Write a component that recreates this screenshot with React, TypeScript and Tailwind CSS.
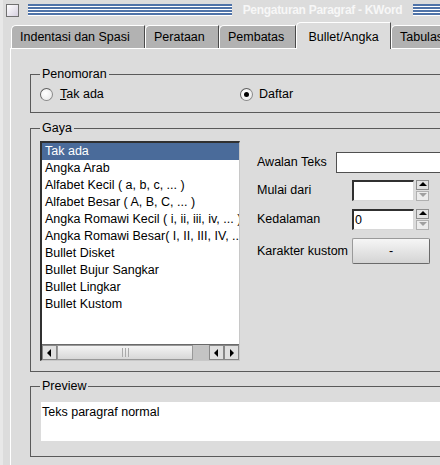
import React from "react";

const items = [
  "Tak ada",
  "Angka Arab",
  "Alfabet Kecil ( a, b, c, ... )",
  "Alfabet Besar ( A, B, C, ... )",
  "Angka Romawi Kecil ( i, ii, iii, iv, ... )",
  "Angka Romawi Besar( I, II, III, IV, ... )",
  "Bullet Disket",
  "Bullet Bujur Sangkar",
  "Bullet Lingkar",
  "Bullet Kustom",
];

function Stripes({ className }: { className: string }) {
  return (
    <div
      className={
        "h-[12px] bg-[repeating-linear-gradient(to_bottom,#4f73a8_0px,#4f73a8_2px,#ffffff_2px,#ffffff_3px)] " +
        className
      }
    />
  );
}

function Tab({ label, w, active }: { label: string; w: string; active?: boolean }) {
  if (active) {
    return (
      <div
        className={
          "relative z-10 -mb-px h-[27px] shrink-0 whitespace-nowrap flex items-start pt-[5px] justify-center bg-[#dcdcdc] border-l border-t border-white rounded-tl-[5px] border-r border-r-[#505050] " +
          w
        }
      >
        {label}
      </div>
    );
  }
  return (
    <div
      className={
        "h-[23px] shrink-0 flex items-center pl-[8px] bg-[#b2b2b2] border-l border-t border-white rounded-tl-[5px] border-r border-r-[#4a4a4a] whitespace-nowrap overflow-hidden " +
        w
      }
    >
      {label}
    </div>
  );
}

function Radio({ checked }: { checked?: boolean }) {
  return (
    <div className="w-[13px] h-[13px] rounded-full border border-[#8a8a8a] border-t-[#606060] border-l-[#606060] bg-[radial-gradient(circle_at_40%_40%,#ffffff,#e4e4e4)] flex items-center justify-center">
      {checked && <div className="w-[5px] h-[5px] rounded-full bg-black" />}
    </div>
  );
}

function Arrow({ dir, muted }: { dir: "up" | "down" | "left" | "right"; muted?: boolean }) {
  const c = muted ? "#a0a0a0" : "#000";
  const pts = {
    up: "1,6 5,2 9,6",
    down: "1,2 5,6 9,2",
    left: "6,1 2,5 6,9",
    right: "3,1 7,5 3,9",
  }[dir];
  return (
    <svg width="10" height="10" viewBox="0 0 10 10">
      <polygon points={pts} fill={c} />
    </svg>
  );
}

function SpinBox({ value }: { value?: string }) {
  return (
    <div className="flex items-center gap-[2px]">
      <div className="w-[62px] h-[21px] bg-white border-t-2 border-l-2 border-[#303030] border-r border-b border-r-[#d8d8d8] border-b-[#d8d8d8] pl-[1px] flex items-center">
        {value}
      </div>
      <div className="flex flex-col gap-px">
        <div className="w-[13px] h-[10px] bg-[#e2e2e2] border border-[#8c8c8c] flex items-center justify-center">
          <Arrow dir="up" />
        </div>
        <div className="w-[13px] h-[10px] bg-[#ececec] border border-[#b0b0b0] flex items-center justify-center">
          <Arrow dir="down" muted />
        </div>
      </div>
    </div>
  );
}

export default function App() {
  return (
    <div className="w-[440px] h-[465px] overflow-hidden bg-[#dcdcdc] text-[12.5px] text-black font-['Liberation_Sans',Arial,sans-serif] border-l-[3px] border-l-[#e8e8e8]">
      {/* title bar */}
      <div className="h-[20px] flex items-center pl-[3px]">
        <div className="w-[13px] h-[13px] shrink-0 border border-[#707070] bg-[linear-gradient(135deg,#ffffff,#d6d0e0)]" />
        <Stripes className="ml-[9px] w-[204px] shrink-0" />
        <div className="w-[181px] shrink-0 overflow-hidden text-center text-[12px] font-bold text-[#f7f7f7] whitespace-nowrap tracking-[-0.3px]">
          Pengaturan Paragraf - KWord
        </div>
        <Stripes className="flex-1" />
      </div>

      {/* tabs */}
      <div className="flex items-end h-[28px] pl-[8px]">
        <Tab label="Indentasi dan Spasi" w="w-[134px]" />
        <Tab label="Perataan" w="w-[74px]" />
        <Tab label="Pembatas" w="w-[77px]" />
        <Tab label="Bullet/Angka" w="w-[95px]" active />
        <Tab label="Tabulasi" w="w-[70px]" />
      </div>

      {/* panel */}
      <div className="ml-[7px] h-[420px] border-l border-t border-white pl-[19px] pt-[18px]">
        <fieldset className="w-[440px] border border-[#5a5a5a] pb-[10px]">
          <legend className="ml-[9px] px-[2px] leading-[14px]">Penomoran</legend>
          <div className="flex items-center pt-[6px] pl-[9px] h-[21px]">
            <Radio />
            <span className="ml-[7px] w-[180px]">
              <span className="underline">T</span>ak ada
            </span>
            <Radio checked />
            <span className="ml-[6px]">Daftar</span>
          </div>
        </fieldset>

        <fieldset className="mt-[8px] w-[440px] border border-[#5a5a5a] pb-[10px]">
          <legend className="ml-[9px] px-[2px] leading-[14px]">Gaya</legend>
          <div className="flex pt-[6px] pl-[9px]">
            <div className="w-[200px] h-[220px] bg-white border-t-2 border-l-2 border-[#303030] border-r border-b border-r-[#c8c8c8] border-b-[#c8c8c8] flex flex-col">
              <div className="flex-1 overflow-hidden">
                {items.map((it, i) => (
                  <div
                    key={it}
                    className={
                      "h-[17px] leading-[17px] pl-[3px] whitespace-nowrap " +
                      (i === 0 ? "bg-[#4a6b9a] text-white" : "")
                    }
                  >
                    {it}
                  </div>
                ))}
              </div>
              <div className="h-[16px] flex bg-[#c4c4c4] border-t border-[#6a6a6a]">
                <div className="w-[15px] bg-[#e0e0e0] border border-[#888] flex items-center justify-center">
                  <Arrow dir="left" />
                </div>
                <div className="w-[136px] bg-[linear-gradient(to_bottom,#f4f4f4,#d8d8d8)] border border-[#999] flex items-center justify-center gap-[2px]">
                  <div className="w-px h-[9px] bg-[#aaa]" />
                  <div className="w-px h-[9px] bg-[#aaa]" />
                  <div className="w-px h-[9px] bg-[#aaa]" />
                </div>
                <div className="flex-1" />
                <div className="w-[15px] bg-[#e0e0e0] border border-[#888] flex items-center justify-center">
                  <Arrow dir="left" />
                </div>
                <div className="w-[15px] bg-[#e0e0e0] border border-[#888] flex items-center justify-center">
                  <Arrow dir="right" />
                </div>
              </div>
            </div>

            <div className="ml-[17px] mt-[11px] flex flex-col">
              <div className="flex items-center h-[21px]">
                <span className="w-[79px] whitespace-nowrap">Awalan Teks</span>
                <div className="w-[120px] h-[21px] bg-white border border-[#505050] border-r-0" />
              </div>
              <div className="flex items-center mt-[7px]">
                <span className="w-[95px]">Mulai dari</span>
                <SpinBox />
              </div>
              <div className="flex items-center mt-[8px]">
                <span className="w-[95px]">Kedalaman</span>
                <SpinBox value="0" />
              </div>
              <div className="flex items-center mt-[8px]">
                <span className="w-[95px] whitespace-nowrap">Karakter kustom</span>
                <div className="w-[78px] h-[26px] rounded-[2px] border border-[#6a6a6a] border-t-[#9a9a9a] border-l-[#9a9a9a] bg-[linear-gradient(to_bottom,#f6f6f6,#d4d4d4)] flex items-center justify-center">
                  -
                </div>
              </div>
            </div>
          </div>
        </fieldset>

        <fieldset className="mt-[7px] w-[440px] border border-[#5a5a5a] pb-[15px]">
          <legend className="ml-[9px] px-[2px] leading-[14px]">Preview</legend>
          <div className="mt-[9px] ml-[10px] h-[39px] bg-white pl-[1px] pt-[1px]">
            Teks paragraf normal
          </div>
        </fieldset>
      </div>
    </div>
  );
}
